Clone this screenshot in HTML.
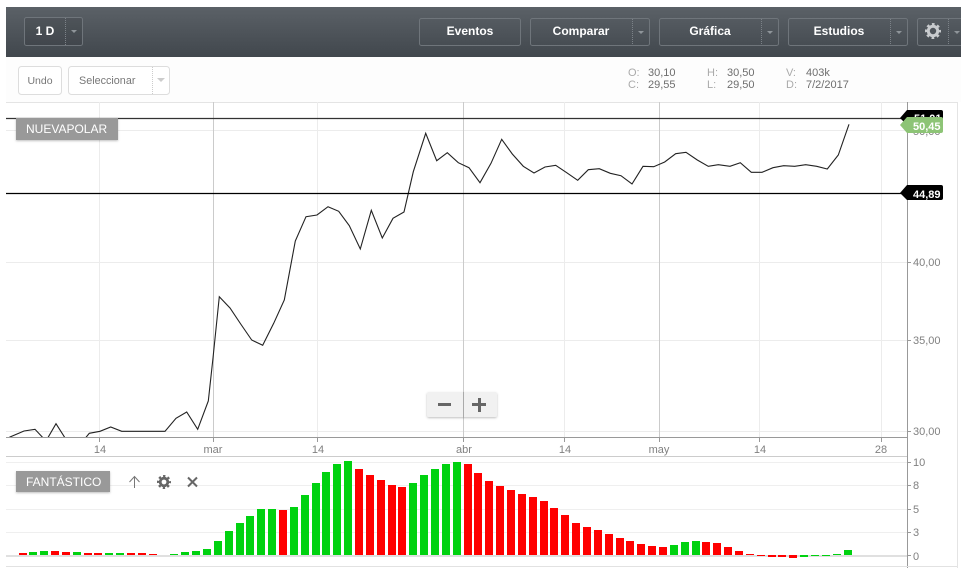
<!DOCTYPE html>
<html><head><meta charset="utf-8"><style>
html,body{margin:0;padding:0;background:#fff;width:961px;height:568px;overflow:hidden}
svg{display:block;font-family:"Liberation Sans",sans-serif}
.b{fill:#fff;font-weight:bold;font-size:12px;text-anchor:middle}
.btn{fill:none;stroke:#6f757b;stroke-width:1}
.sp{stroke:#7c8288;stroke-width:1;stroke-dasharray:1 1}
.ar{fill:#8f959a}
.l{fill:#aaa;font-size:11px}.v{fill:#6e6e6e;font-size:11px}
.ax{fill:#808080;font-size:11px}
.w{fill:#fff;font-size:11px;font-weight:bold}
</style></head><body>
<svg width="961" height="568" viewBox="0 0 961 568" xmlns="http://www.w3.org/2000/svg">
<defs>
<linearGradient id="g" x1="0" y1="0" x2="0" y2="1"><stop offset="0" stop-color="#5b6167"/><stop offset="1" stop-color="#41474d"/></linearGradient>
<clipPath id="c"><rect x="6" y="100" width="901" height="337"/></clipPath>
<filter id="s" x="-10%" y="-20%" width="120%" height="150%"><feDropShadow dx="0" dy="1" stdDeviation="1" flood-color="#000" flood-opacity=".25"/></filter>
</defs>
<rect x="6" y="7" width="955" height="50" fill="url(#g)"/>
<rect x="24.5" y="17.5" width="58" height="28" rx="2" fill="rgba(0,0,0,.08)" stroke="#6f757b"/><path d="M65.500 18v27" class="sp"/>
<text x="45" y="35" class="b">1 D</text><path d="M71 30h6l-3 3z" class="ar"/>
<rect x="419.5" y="18.5" width="101" height="27" rx="2" class="btn"/><text x="470" y="35" class="b">Eventos</text>
<rect x="530.5" y="18.5" width="119" height="27" rx="2" class="btn"/><path d="M632.500 19v26" class="sp"/><text x="581" y="35" class="b">Comparar</text><path d="M638 31h6l-3 3z" class="ar"/>
<rect x="659.5" y="18.5" width="119" height="27" rx="2" class="btn"/><path d="M761.500 19v26" class="sp"/><text x="710" y="35" class="b">Gráfica</text><path d="M767 31h6l-3 3z" class="ar"/>
<rect x="788.5" y="18.5" width="119" height="27" rx="2" class="btn"/><path d="M890.500 19v26" class="sp"/><text x="839" y="35" class="b">Estudios</text><path d="M896 31h6l-3 3z" class="ar"/>
<rect x="917.5" y="18.5" width="60" height="27" rx="2" class="btn"/><path d="M948.500 19v26" class="sp"/>
<circle cx="933" cy="31" r="4.700" fill="none" stroke="#c8cbce" stroke-width="3"/><circle cx="933" cy="31" r="6.800" fill="none" stroke="#c8cbce" stroke-width="2.400" stroke-dasharray="2.670 2.670" stroke-dashoffset="1.300"/>
<path d="M954 31h6l-3 3z" class="ar"/>

<rect x="6" y="57" width="955" height="45" fill="#fdfdfd"/>
<rect x="18.5" y="66.5" width="43" height="28" rx="3" fill="#fff" stroke="#ddd"/><text x="40" y="84" text-anchor="middle" font-size="10.500" fill="#777">Undo</text>
<rect x="68.5" y="66.5" width="101" height="28" rx="3" fill="#fff" stroke="#ddd"/><path d="M152.500 67v27" stroke="#ccc" stroke-dasharray="1 1"/><text x="79" y="84" font-size="10.800" fill="#777">Seleccionar</text><path d="M157 78h8l-4 4z" fill="#ccc"/>
<text x="628" y="76" class="l">O:</text><text x="648" y="76" class="v">30,10</text><text x="628" y="88" class="l">C:</text><text x="648" y="88" class="v">29,55</text>
<text x="707" y="76" class="l">H:</text><text x="727" y="76" class="v">30,50</text><text x="707" y="88" class="l">L:</text><text x="727" y="88" class="v">29,50</text>
<text x="786" y="76" class="l">V:</text><text x="806" y="76" class="v">403k</text><text x="786" y="88" class="l">D:</text><text x="806" y="88" class="v">7/2/2017</text>

<path d="M6 102.500H957M957.500 102V568" stroke="#e4e4e4" fill="none"/>
<path d="M6 130.500H907M6 262.500H907M6 340.500H907M6 431.500H907M99.500 102V437M317.500 102V437M564.500 102V437M759.500 102V437M881.500 102V437" stroke="#ececec" fill="none"/>
<path d="M213.500 102V437M463.500 102V437M659.500 102V437" stroke="#cbcbcb" fill="none"/>
<path d="M6 437.500H907.500M907.500 102V568M99.500 437V442M213.500 437V442M317.500 437V442M463.500 437V442M564.500 437V442M659.500 437V442M759.500 437V442M881.500 437V442M907 262.500h4M907 340.500h4M907 431.500h4" stroke="#999" fill="none"/>
<g clip-path="url(#c)"><polyline fill="none" stroke="#222" stroke-width="1.100" points="5,440 10,437 24,431 35,429.300 46,441 56,423.700 67,441 83,441 89.300,433.300 100,431.300 110.700,427 121.700,431.300 165,431.300 176,418.300 186.700,412 197.700,429.300 208.300,401 213,358 219.300,296.700 230,308 240.700,324 251.700,340 262.700,345.300 273.700,323.300 284.300,300 295.300,241 306,216.700 317,215 328,206.700 338.700,211.300 349.300,225.700 360.300,249 371.300,210.300 382.300,238 393,218.300 404,212 413.300,171.700 425.700,133.300 436.700,160.700 447.300,152.700 458.300,162.700 469,167.700 480,182.700 491,163.300 501.700,139.300 512.300,154 523.300,166.300 534,173 545,167 555.700,165.300 566.700,172.700 577.700,180.300 588.300,169.700 599.300,168.700 610.300,173.300 621,175.700 632,184 643,166.300 653.700,166.700 664.700,162 675.700,153.700 686,152.300 697.300,160 708.300,166.300 718.300,164.700 730,166.300 740.300,162.700 751.300,172.300 762,172.300 773,167.700 783.700,165.700 794.700,166.300 805.700,164.700 816.700,166.300 827.300,169 838.300,155 849,124.300"/></g>
<path d="M6 118.500H907" stroke="#333" stroke-width="1.200"/>
<path d="M6 193.500H907" stroke="#000" stroke-width="1.200"/>

<text x="913" y="266" class="ax">40,00</text><text x="913" y="344" class="ax">35,00</text><text x="913" y="435" class="ax">30,00</text>
<text x="913" y="135" class="ax">50,00</text>
<path d="M907 110H941q2 0 2 2V125H907L900 118z" fill="#000"/><text x="914" y="122" class="w">51,01</text>
<path d="M907 117H941q2 0 2 2V131q0 2-2 2H907L900 125z" fill="#8dc476"/><text x="913" y="130" class="w">50,45</text>
<path d="M907 185H941q2 0 2 2V198q0 2-2 2H907L900 193z" fill="#000"/><text x="913" y="198" class="w">44,89</text>

<rect x="16" y="118" width="102" height="22" fill="#999" filter="url(#s)"/><text x="26" y="133" fill="#fff" font-size="12">NUEVAPOLAR</text>

<rect x="427" y="392" width="70" height="25" rx="2" fill="#f1f1f1" filter="url(#s)"/>
<path d="M463.500 392V417" stroke="#aaa"/>
<path d="M438 403h13v3h-13zM478 398h3v5h5v3h-5v6h-3v-6h-6v-3h6z" fill="#666"/>

<text x="100" y="453" text-anchor="middle" class="ax">14</text><text x="213" y="453" text-anchor="middle" class="ax">mar</text><text x="318" y="453" text-anchor="middle" class="ax">14</text><text x="464" y="453" text-anchor="middle" class="ax">abr</text><text x="565" y="453" text-anchor="middle" class="ax">14</text><text x="659" y="453" text-anchor="middle" class="ax">may</text><text x="760" y="453" text-anchor="middle" class="ax">14</text><text x="881" y="453" text-anchor="middle" class="ax">28</text>

<path d="M6 456.500H907" stroke="#ccc"/>
<path d="M6 462.500H907M6 485.500H907M6 509.500H907M6 532.500H907" stroke="#efefef"/>
<path d="M6 566.500H957" stroke="#e2e2e2"/>
<path d="M6 556H907" stroke="#e0e0e0" stroke-width="2"/>
<path d="M907 462.500h4M907 485.500h4M907 509.500h4M907 532.500h4M907 555.500h4" stroke="#999"/>
<text x="913" y="466" class="ax">10</text><text x="913" y="489" class="ax">8</text><text x="913" y="513" class="ax">5</text><text x="913" y="536" class="ax">3</text><text x="913" y="560" class="ax">0</text>

<path fill="#00d210" d="M29 552h8v3h-8zM40 551h8v4h-8zM73 552h8v3h-8zM105 553h8v2h-8zM116 553h8v2h-8zM170 554h8v1h-8zM181 552h8v3h-8zM192 551h8v4h-8zM203 549h8v6h-8zM214 541h8v14h-8zM225 531h8v24h-8zM236 523h8v32h-8zM246 516h8v39h-8zM257 509h8v46h-8zM268 509h8v46h-8zM290 507h8v48h-8zM301 495h8v60h-8zM312 483h8v72h-8zM322 472h8v83h-8zM333 464h8v91h-8zM344 461h8v94h-8zM409 483h8v72h-8zM420 475h8v80h-8zM431 469h8v86h-8zM442 464h8v91h-8zM453 462h8v93h-8zM670 545h8v10h-8zM681 542h8v13h-8zM692 541h8v14h-8zM800 555h8v2h-8zM811 555h8v1h-8zM822 555h8v1h-8zM833 554h8v1h-8zM844 550h8v5h-8z"/>
<path fill="#f00" d="M19 553h8v2h-8zM51 551h8v4h-8zM62 552h8v3h-8zM84 553h8v2h-8zM94 553h8v2h-8zM127 553h8v2h-8zM138 553h8v2h-8zM149 554h8v1h-8zM279 510h8v45h-8zM355 469h8v86h-8zM366 475h8v80h-8zM377 480h8v75h-8zM388 485h8v70h-8zM398 487h8v68h-8zM464 464h8v91h-8zM474 473h8v82h-8zM485 481h8v74h-8zM496 486h8v69h-8zM507 490h8v65h-8zM518 494h8v61h-8zM529 497h8v58h-8zM540 501h8v54h-8zM550 508h8v47h-8zM561 515h8v40h-8zM572 523h8v32h-8zM583 527h8v28h-8zM594 530h8v25h-8zM605 534h8v21h-8zM616 538h8v17h-8zM626 541h8v14h-8zM637 544h8v11h-8zM648 546h8v9h-8zM659 547h8v8h-8zM702 542h8v13h-8zM713 543h8v12h-8zM724 547h8v8h-8zM735 551h8v4h-8zM746 554h8v1h-8zM757 555h8v1h-8zM768 555h8v2h-8zM778 555h8v2h-8zM789 555h8v3h-8z"/>

<rect x="16" y="471" width="94" height="21" fill="#999" filter="url(#s)"/><text x="26" y="486" fill="#fff" font-size="12">FANTÁSTICO</text>
<path d="M134.500 488V477M129.500 482l5-5.500 5 5.500" fill="none" stroke="#777" stroke-width="1"/>
<circle cx="164" cy="482" r="3.800" fill="none" stroke="#666" stroke-width="2.800"/><circle cx="164" cy="482" r="5.900" fill="none" stroke="#666" stroke-width="2.200" stroke-dasharray="2.320 2.320" stroke-dashoffset="1.160"/>
<path d="M188 477.500l9 9M197 477.500l-9 9" stroke="#666" stroke-width="2" fill="none"/>
</svg>
</body></html>
